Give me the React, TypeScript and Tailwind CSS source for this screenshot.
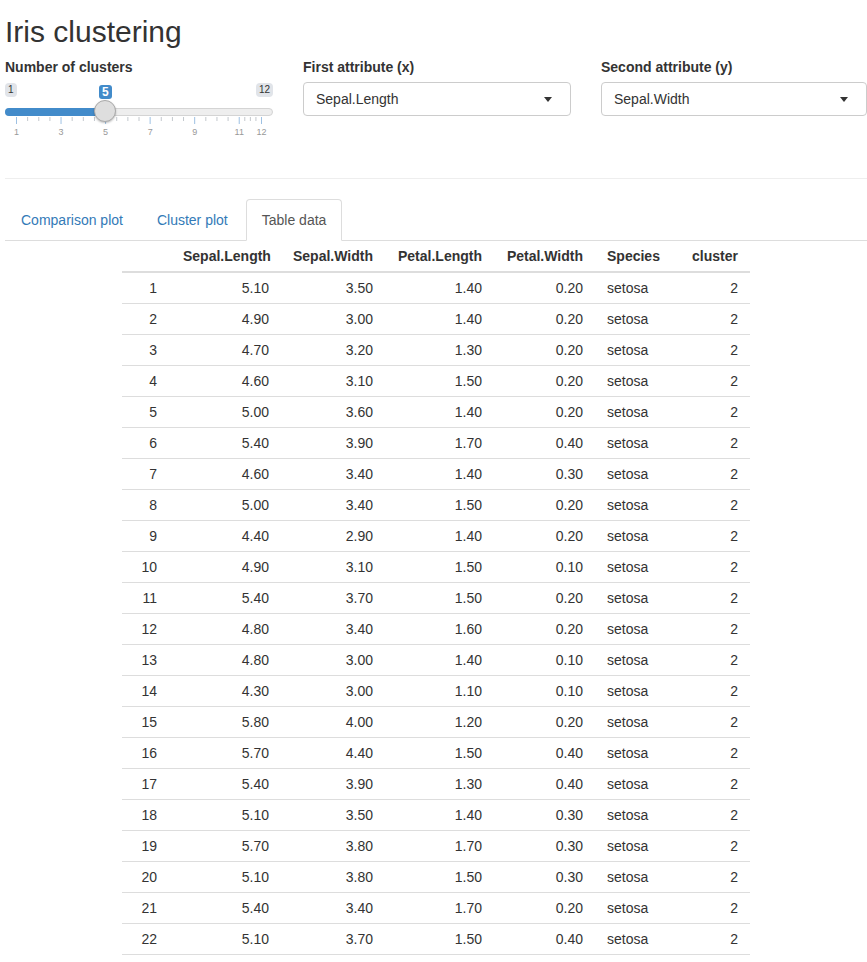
import React from "react";

type Row = [number, number, number, number, number];

const rows: Row[] = [
  [1, 5.1, 3.5, 1.4, 0.2],
  [2, 4.9, 3.0, 1.4, 0.2],
  [3, 4.7, 3.2, 1.3, 0.2],
  [4, 4.6, 3.1, 1.5, 0.2],
  [5, 5.0, 3.6, 1.4, 0.2],
  [6, 5.4, 3.9, 1.7, 0.4],
  [7, 4.6, 3.4, 1.4, 0.3],
  [8, 5.0, 3.4, 1.5, 0.2],
  [9, 4.4, 2.9, 1.4, 0.2],
  [10, 4.9, 3.1, 1.5, 0.1],
  [11, 5.4, 3.7, 1.5, 0.2],
  [12, 4.8, 3.4, 1.6, 0.2],
  [13, 4.8, 3.0, 1.4, 0.1],
  [14, 4.3, 3.0, 1.1, 0.1],
  [15, 5.8, 4.0, 1.2, 0.2],
  [16, 5.7, 4.4, 1.5, 0.4],
  [17, 5.4, 3.9, 1.3, 0.4],
  [18, 5.1, 3.5, 1.4, 0.3],
  [19, 5.7, 3.8, 1.7, 0.3],
  [20, 5.1, 3.8, 1.5, 0.3],
  [21, 5.4, 3.4, 1.7, 0.2],
  [22, 5.1, 3.7, 1.5, 0.4],
];

const majors = [1, 3, 5, 7, 9, 11, 12];

function xOf(v: number) {
  return 11 + (v - 1) * (245 / 11);
}

function SliderTicks() {
  const minors: number[] = [];
  for (let i = 0; i < majors.length - 1; i++) {
    const a = majors[i];
    const b = majors[i + 1];
    for (let k = 1; k < 4; k++) minors.push(a + ((b - a) * k) / 4);
  }
  return (
    <svg width="268" height="22" className="absolute left-0 top-[35px]">
      {minors.map((v) => (
        <line key={"m" + v} x1={xOf(v) + 0.5} x2={xOf(v) + 0.5} y1="0" y2="4" stroke="#c3c8cd" strokeWidth="1" />
      ))}
      {majors.map((v) => (
        <g key={v}>
          <line x1={xOf(v) + 0.5} x2={xOf(v) + 0.5} y1="0" y2="7" stroke="#9ec1e3" strokeWidth="1" />
          <text x={xOf(v) + 0.5} y="18" fontSize="9" fill="#999" textAnchor="middle" fontFamily="Liberation Sans, Arial, sans-serif">
            {v}
          </text>
        </g>
      ))}
    </svg>
  );
}

function Slider() {
  return (
    <div className="relative h-[55px] w-[268px]">
      <span className="absolute left-0 top-[1px] h-[14px] rounded-[4px] bg-[#e1e4e9] px-[3px] text-[10px] leading-[14px] text-[#333]">
        1
      </span>
      <span className="absolute right-0 top-[1px] h-[14px] rounded-[4px] bg-[#e1e4e9] px-[3px] text-[10px] leading-[14px] text-[#333]">
        12
      </span>
      <span className="absolute left-[94px] top-[3px] h-[14px] rounded-[3px] bg-[#428bca] px-[3px] text-[12px] font-bold leading-[14px] text-white">
        5
      </span>
      <div className="absolute left-0 top-[26px] h-[8px] w-[268px] rounded-full border border-[#d4d4d4] bg-[#eeeeee]" />
      <div className="absolute left-0 top-[26px] h-[8px] w-[102px] rounded-l-full bg-[#428bca]" />
      <SliderTicks />
      <div className="absolute left-[89px] top-[18px] h-[22px] w-[22px] rounded-full border border-[#aaaaaa] bg-[#dedede] shadow-[0_1px_2px_rgba(0,0,0,0.25)]" />
    </div>
  );
}

function Select({ label, value }: { label: string; value: string }) {
  return (
    <div>
      <label className="mb-[5px] block font-bold leading-5">{label}</label>
      <div className="flex h-[34px] items-center justify-between rounded-[4px] border border-[#cccccc] pl-[12px] pr-[18px]">
        <span>{value}</span>
        <span className="h-0 w-0 border-x-[4px] border-t-[5px] border-x-transparent border-t-[#333]" />
      </div>
    </div>
  );
}

function Tab({ label, active }: { label: string; active?: boolean }) {
  return (
    <div
      className={
        active
          ? "-mb-px mr-[2px] rounded-t-[4px] border border-[#dddddd] border-b-white bg-white px-[15px] py-[10px] leading-5 text-[#555]"
          : "-mb-px mr-[2px] rounded-t-[4px] border border-transparent px-[15px] py-[10px] leading-5 text-[#337ab7]"
      }
    >
      {label}
    </div>
  );
}

export default function App() {
  return (
    <div className="min-h-screen bg-white pl-[5px] font-['Liberation_Sans',Arial,sans-serif] text-[14px] text-[#333]">
      <h2 className="pt-[15px] text-[30px] font-normal leading-[33px]">Iris clustering</h2>

      <div className="mt-[9px] grid grid-cols-[268px_268px_266px] gap-x-[30px]">
        <div>
          <label className="mb-[5px] block font-bold leading-5">Number of clusters</label>
          <Slider />
        </div>
        <Select label="First attribute (x)" value="Sepal.Length" />
        <Select label="Second attribute (y)" value="Sepal.Width" />
      </div>

      <div className="mb-[20px] mt-[41px] h-px bg-[#eeeeee]" />

      <div className="flex border-b border-[#dddddd]">
        <Tab label="Comparison plot" />
        <Tab label="Cluster plot" />
        <Tab label="Table data" active />
      </div>

      <table className="mx-auto w-[628px] table-fixed border-separate border-spacing-0">
        <colgroup>
          <col className="w-[49px]" />
          <col className="w-[110px]" />
          <col className="w-[104px]" />
          <col className="w-[109px]" />
          <col className="w-[101px]" />
          <col className="w-[85px]" />
          <col className="w-[70px]" />
        </colgroup>
        <thead>
          <tr className="font-bold">
            <th className="border-b-2 border-[#dddddd] py-[5px] leading-5" />
            <th className="border-b-2 border-[#dddddd] px-[12px] py-[5px] text-right leading-5">Sepal.Length</th>
            <th className="border-b-2 border-[#dddddd] px-[12px] py-[5px] text-right leading-5">Sepal.Width</th>
            <th className="border-b-2 border-[#dddddd] px-[12px] py-[5px] text-right leading-5">Petal.Length</th>
            <th className="border-b-2 border-[#dddddd] px-[12px] py-[5px] text-right leading-5">Petal.Width</th>
            <th className="border-b-2 border-[#dddddd] px-[12px] py-[5px] text-left leading-5">Species</th>
            <th className="border-b-2 border-[#dddddd] px-[12px] py-[5px] text-right leading-5">cluster</th>
          </tr>
        </thead>
        <tbody>
          {rows.map((r) => (
            <tr key={r[0]}>
              <td className="border-b border-[#dddddd] py-[5px] pr-[14px] text-right leading-5">{r[0]}</td>
              <td className="border-b border-[#dddddd] px-[12px] py-[5px] text-right leading-5">{r[1].toFixed(2)}</td>
              <td className="border-b border-[#dddddd] px-[12px] py-[5px] text-right leading-5">{r[2].toFixed(2)}</td>
              <td className="border-b border-[#dddddd] px-[12px] py-[5px] text-right leading-5">{r[3].toFixed(2)}</td>
              <td className="border-b border-[#dddddd] px-[12px] py-[5px] text-right leading-5">{r[4].toFixed(2)}</td>
              <td className="border-b border-[#dddddd] px-[12px] py-[5px] text-left leading-5">setosa</td>
              <td className="border-b border-[#dddddd] px-[12px] py-[5px] text-right leading-5">2</td>
            </tr>
          ))}
        </tbody>
      </table>
    </div>
  );
}
